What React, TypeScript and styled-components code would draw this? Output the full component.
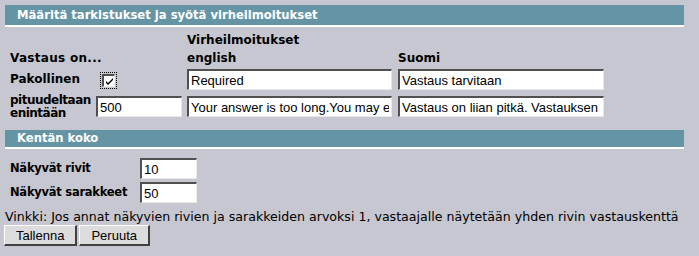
import styled, { createGlobalStyle } from "styled-components";

const GlobalStyle = createGlobalStyle`
  body {
    margin: 0;
    background: #c6c7d0;
    font-family: "DejaVu Sans", Verdana, sans-serif;
    color: #000;
  }
`;

const Page = styled.div`
  width: 699px;
  padding-top: 5px;
`;

const SectionHeader = styled.div<{ $height: number; $gap?: number }>`
  margin: ${(p) => p.$gap ?? 0}px 0 0 5px;
  width: 667px;
  height: ${(p) => p.$height}px;
  line-height: ${(p) => p.$height}px;
  padding-left: 12px;
  background: #6595a5;
  border-bottom: 2px solid #fff;
  color: #fff;
  font-size: 11.6px;
  font-weight: bold;
`;

const ErrorGrid = styled.div`
  display: grid;
  grid-template-columns: 86px 91px 211px 206px;
  grid-template-rows: 18px 18px 25px 29px;
  align-items: center;
  padding: 4px 0 0 10px;
`;

const Label = styled.div<{ $size?: number; $spacing?: number }>`
  font-size: ${(p) => p.$size ?? 12}px;
  letter-spacing: ${(p) => p.$spacing ?? 0}px;
  font-weight: bold;
  line-height: 13px;
  white-space: nowrap;
`;

const TextInput = styled.input<{ $width: number }>`
  width: ${(p) => p.$width}px;
  height: 21px;
  box-sizing: border-box;
  margin: 0;
  padding: 0 2px;
  border-width: 2px 1px 1px 2px;
  border-style: solid;
  border-color: #505050 #e8e8e8 #e8e8e8 #505050;
  background: #fff;
  font-family: "Liberation Sans", Arial, sans-serif;
  font-size: 13px;
  color: #000;
  outline: none;
`;

const CheckFrame = styled.span`
  display: inline-flex;
  margin-left: 4px;
  padding: 1px;
  border: 1px dotted #000;
`;

const CheckBox = styled.span`
  display: inline-flex;
  align-items: center;
  justify-content: center;
  width: 13px;
  height: 13px;
  box-sizing: border-box;
  border-width: 2px 1px 1px 2px;
  border-style: solid;
  border-color: #505050 #f0f0f0 #f0f0f0 #505050;
  background: #fff;
`;

const SizeGrid = styled.div`
  display: grid;
  grid-template-columns: 130px 57px;
  grid-template-rows: 23px 23px;
  align-items: center;
  row-gap: 1px;
  padding: 8px 0 0 10px;
`;

const Hint = styled.div`
  font-size: 12.6px;
  line-height: 15px;
  padding: 5px 0 0 5px;
  white-space: nowrap;
`;

const ButtonRow = styled.div`
  display: flex;
  gap: 2px;
  padding: 1px 0 0 4px;
`;

const Button = styled.button`
  height: 21px;
  padding: 0 11px;
  margin: 0;
  background: #dcdcdc;
  border-width: 1px 2px 2px 1px;
  border-style: solid;
  border-color: #fff #404040 #404040 #fff;
  font-family: "Liberation Sans", Arial, sans-serif;
  font-size: 13px;
  color: #000;
`;

export default function App() {
  return (
    <Page>
      <GlobalStyle />
      <SectionHeader $height={20}>Määritä tarkistukset ja syötä virheilmoitukset</SectionHeader>
      <ErrorGrid>
        <span />
        <span />
        <Label>Virheilmoitukset</Label>
        <span />

        <Label $spacing={0.3}>Vastaus on...</Label>
        <span />
        <Label>english</Label>
        <Label>Suomi</Label>

        <Label>Pakollinen</Label>
        <div>
          <CheckFrame>
            <CheckBox>
              <svg width="7" height="7" viewBox="0 0 7 7">
                <path d="M0 3 L2 5 L7 0 L7 2 L2 7 L0 5 Z" fill="#000" />
              </svg>
            </CheckBox>
          </CheckFrame>
        </div>
        <TextInput $width={205} readOnly defaultValue="Required" />
        <TextInput $width={206} readOnly defaultValue="Vastaus tarvitaan" />

        <Label $spacing={-0.5}>
          pituudeltaan
          <br />
          enintään
        </Label>
        <TextInput $width={86} readOnly defaultValue="500" />
        <TextInput
          $width={205}
          readOnly
          defaultValue="Your answer is too long.You may enter at most 500 characters."
        />
        <TextInput
          $width={206}
          readOnly
          defaultValue="Vastaus on liian pitkä. Vastauksen pituus saa olla enintään 500 merkkiä."
        />
      </ErrorGrid>
      <SectionHeader $height={17} $gap={9}>
        Kentän koko
      </SectionHeader>
      <SizeGrid>
        <Label $size={11.5} $spacing={-0.25}>
          Näkyvät rivit
        </Label>
        <TextInput $width={57} readOnly defaultValue="10" />
        <Label $size={11.5} $spacing={-0.25}>
          Näkyvät sarakkeet
        </Label>
        <TextInput $width={57} readOnly defaultValue="50" />
      </SizeGrid>
      <Hint>
        Vinkki: Jos annat näkyvien rivien ja sarakkeiden arvoksi 1, vastaajalle näytetään yhden rivin
        vastauskenttä
      </Hint>
      <ButtonRow>
        <Button>Tallenna</Button>
        <Button>Peruuta</Button>
      </ButtonRow>
    </Page>
  );
}
